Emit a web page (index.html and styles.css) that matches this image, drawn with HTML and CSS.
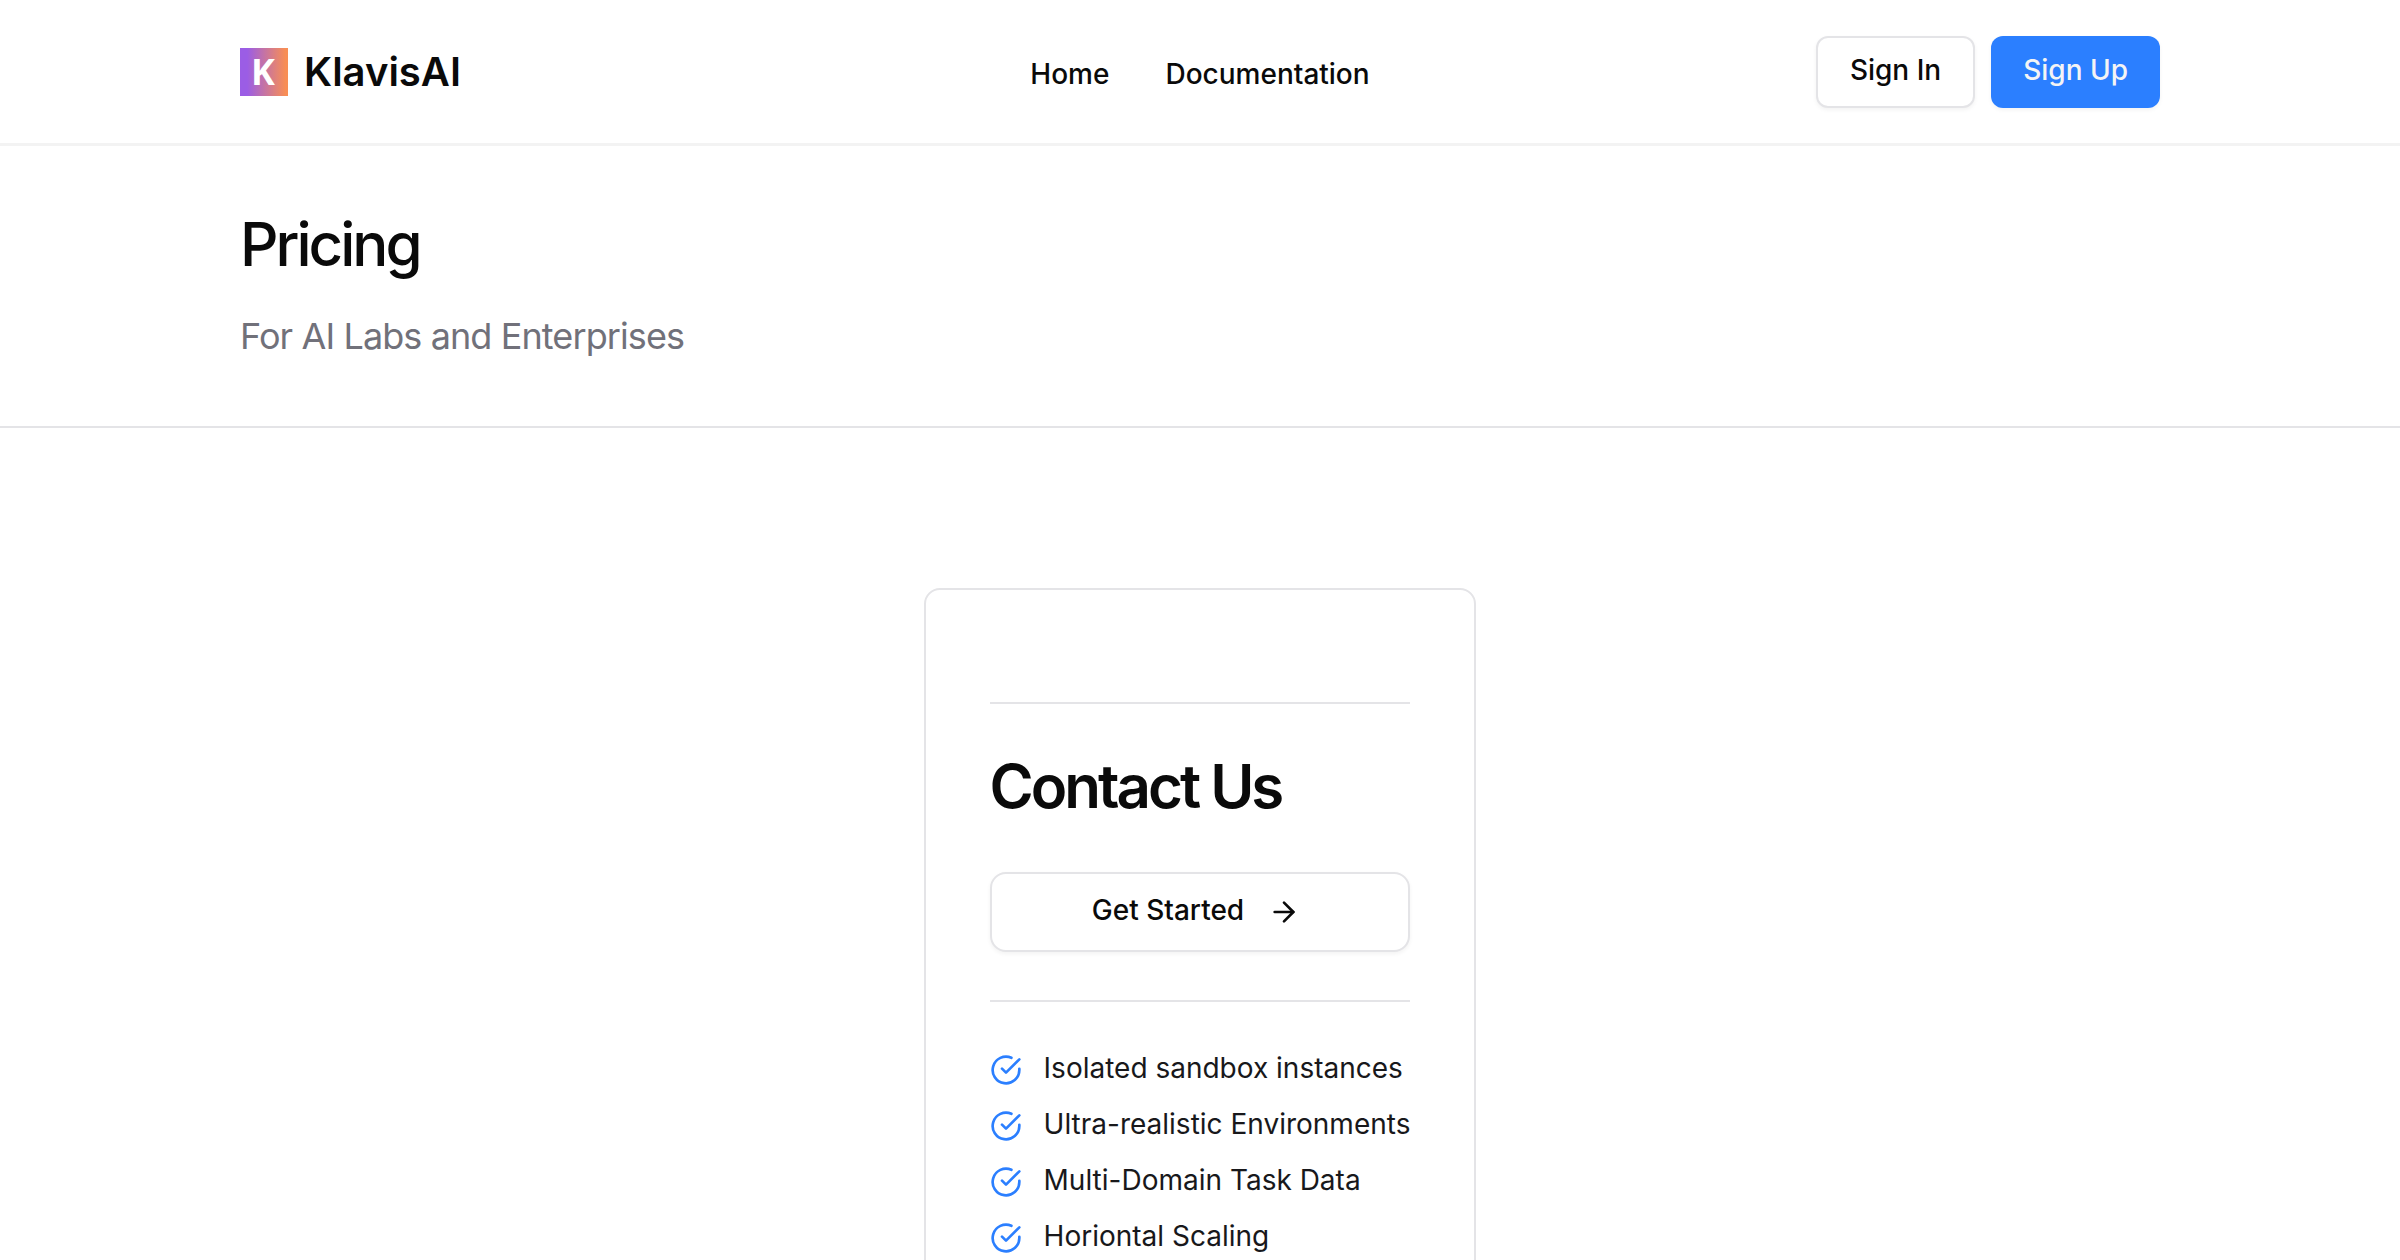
FILE: index.html
```html
<!DOCTYPE html>
<html lang="en">
<head>
    <meta charset="UTF-8">
    <meta name="viewport" content="width=device-width, initial-scale=1.0">
    <title>Pricing - KlavisAI</title>
    <link rel="stylesheet" href="styles.css">
</head>
<body>
    <header class="header">
        <div class="container header-inner">
            <a href="#" class="logo">
                <svg class="logo-mark" viewBox="0 0 48 48" aria-hidden="true">
                    <defs>
                        <linearGradient id="logoGradient" x1="0" y1="0" x2="1" y2="0">
                            <stop offset="0.15" stop-color="#9b5de5"/>
                            <stop offset="0.95" stop-color="#f88e55"/>
                        </linearGradient>
                    </defs>
                    <rect width="48" height="48" fill="url(#logoGradient)"/>
                    <text class="logo-letter" x="23" y="37" text-anchor="middle">K</text>
                </svg>
                <span>KlavisAI</span>
            </a>
            <nav class="nav">
                <a href="#">Home</a>
                <a href="#">Documentation</a>
            </nav>
            <div class="actions">
                <button type="button" class="btn btn-outline">Sign In</button>
                <button type="button" class="btn btn-primary">Sign Up</button>
            </div>
        </div>
    </header>
    <main>
        <section class="hero">
            <div class="container">
                <h1>Pricing</h1>
                <p>For AI Labs and Enterprises</p>
            </div>
        </section>
        <section class="plans">
            <div class="card">
                <div class="card-price">
                    <h2>Contact Us</h2>
                    <button type="button" class="btn btn-outline btn-wide">
                        Get Started
                        <svg class="arrow" viewBox="0 0 24 24" aria-hidden="true">
                            <path d="M5 12h14"/>
                            <path d="m12 5 7 7-7 7"/>
                        </svg>
                    </button>
                </div>
                <ul class="features">
                    <li>
                        <svg class="check" viewBox="0 0 24 24" aria-hidden="true"><path d="M22 11.08V12a10 10 0 1 1-5.93-9.14"/><path d="m22 4-10 10.01-3-3"/></svg>
                        <span>Isolated sandbox instances</span>
                    </li>
                    <li>
                        <svg class="check" viewBox="0 0 24 24" aria-hidden="true"><path d="M22 11.08V12a10 10 0 1 1-5.93-9.14"/><path d="m22 4-10 10.01-3-3"/></svg>
                        <span>Ultra-realistic Environments</span>
                    </li>
                    <li>
                        <svg class="check" viewBox="0 0 24 24" aria-hidden="true"><path d="M22 11.08V12a10 10 0 1 1-5.93-9.14"/><path d="m22 4-10 10.01-3-3"/></svg>
                        <span>Multi-Domain Task Data</span>
                    </li>
                    <li>
                        <svg class="check" viewBox="0 0 24 24" aria-hidden="true"><path d="M22 11.08V12a10 10 0 1 1-5.93-9.14"/><path d="m22 4-10 10.01-3-3"/></svg>
                        <span>Horiontal Scaling</span>
                    </li>
                </ul>
            </div>
        </section>
    </main>
</body>
</html>
```
FILE: styles.css
```css
* {
    box-sizing: border-box;
}
body {
    margin: 0;
    font-family: Inter, sans-serif;
    font-size: 28px;
    line-height: 40px;
    background-color: #fff;
    color: #0a0a0a;
}
h1, h2, p, ul {
    margin: 0;
    padding: 0;
}
a {
    color: inherit;
    text-decoration: none;
}
.container {
    width: 80%;
    margin: 0 auto;
}
.header {
    border-bottom: 3px solid #f3f3f3;
}
.header-inner {
    display: grid;
    grid-template-columns: 1fr auto 1fr;
    align-items: center;
    padding: 36px 0 35px;
}
.logo {
    display: flex;
    align-items: center;
    gap: 16px;
    font-size: 40px;
    font-weight: 600;
}
.logo-mark {
    width: 48px;
    height: 48px;
}
.logo-letter {
    font-family: "Noto Sans", sans-serif;
    font-size: 36px;
    font-weight: 700;
    fill: #fff;
}
.nav {
    display: flex;
    gap: 56px;
    padding-top: 4px;
    font-weight: 500;
}
.actions {
    display: flex;
    justify-content: flex-end;
    gap: 16px;
}
.btn {
    display: flex;
    align-items: center;
    justify-content: center;
    height: 72px;
    padding: 0 32px 4px;
    border: none;
    border-radius: 12px;
    font-family: inherit;
    font-size: 28px;
    font-weight: 500;
    line-height: 40px;
    cursor: pointer;
    box-shadow: 0 2px 4px rgba(0, 0, 0, 0.05);
}
.btn-outline {
    border: 2px solid #e4e4e7;
    background-color: #fff;
    color: #0a0a0a;
}
.btn-primary {
    background-color: #2b7fff;
    color: #f4f4f5;
}
.btn-wide {
    width: 100%;
    height: 80px;
    gap: 24px;
    border-radius: 16px;
}
.hero {
    padding: 64px 0;
    border-bottom: 2px solid #e4e4e7;
}
.hero h1 {
    font-size: 60px;
    font-weight: 500;
    line-height: 68px;
    letter-spacing: -0.05em;
}
.hero p {
    margin-top: 32px;
    font-size: 36px;
    line-height: 52px;
    letter-spacing: -0.025em;
    color: #71717a;
}
.plans {
    display: flex;
    justify-content: center;
    padding: 160px 0;
}
.card {
    padding: 112px 64px 64px;
    border: 2px solid #e4e4e7;
    border-radius: 16px;
}
.card-price {
    padding: 48px 0;
    border-top: 2px solid #e4e4e7;
    border-bottom: 2px solid #e4e4e7;
}
.card-price h2 {
    margin-bottom: 52px;
    font-size: 60px;
    font-weight: 600;
    line-height: 68px;
    letter-spacing: -0.05em;
}
.arrow, .check {
    fill: none;
    stroke: currentColor;
    stroke-width: 2;
    stroke-linecap: round;
    stroke-linejoin: round;
}
.arrow {
    width: 32px;
    height: 32px;
    margin-top: 4px;
    margin-right: 8px;
}
.features {
    display: flex;
    flex-direction: column;
    gap: 20px;
    padding-top: 48px;
    list-style: none;
    line-height: 36px;
    color: #18181b;
}
.features li {
    display: flex;
    align-items: flex-start;
    gap: 22px;
}
.check {
    width: 32px;
    height: 32px;
    margin-top: 4px;
    color: #2b7fff;
}
```
